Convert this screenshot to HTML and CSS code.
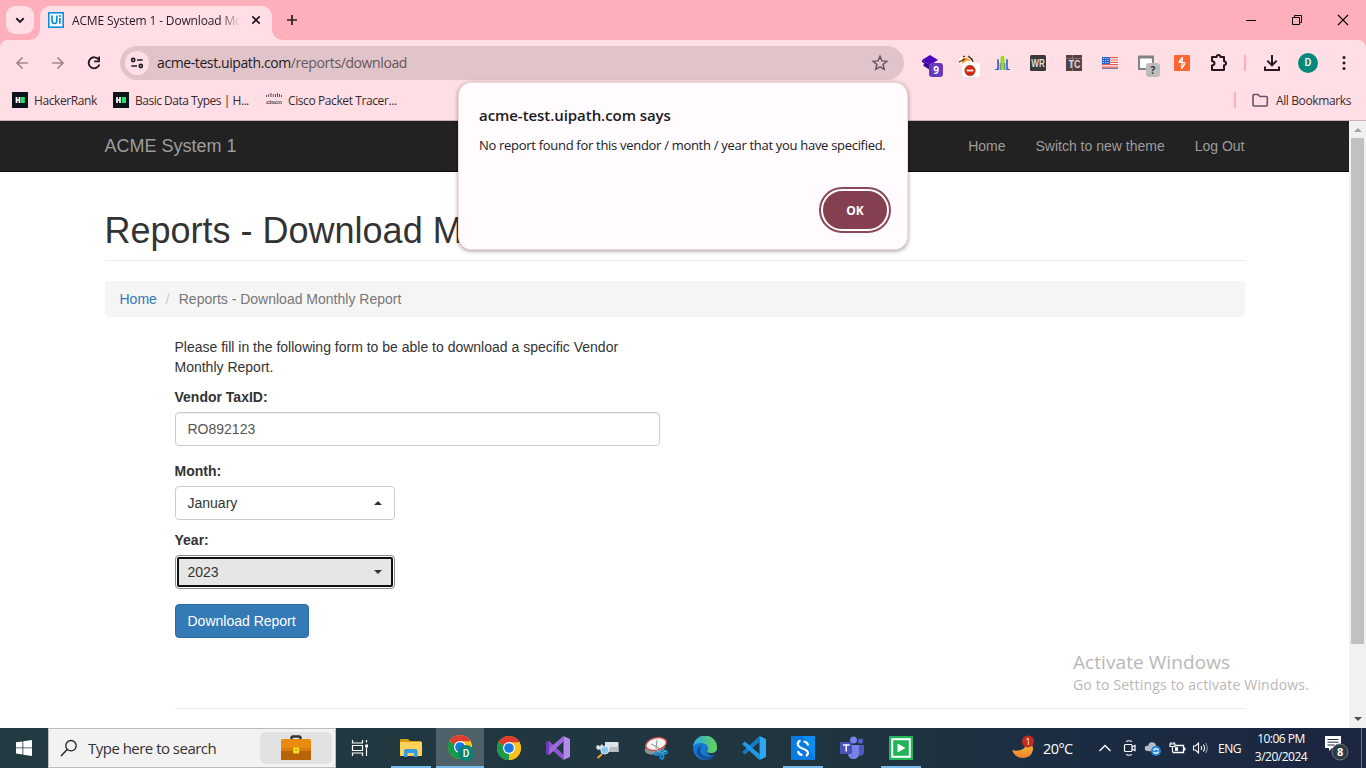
FILE: index.html
```html
<!DOCTYPE html>
<html lang="en">
<head>
<meta charset="utf-8">
<title>ACME System 1 - Download Monthly Report</title>
<link rel="stylesheet" href="styles.css">
</head>
<body>
<div class="screen">
  <div class="tabstrip">
    <div class="tab-search"><svg width="28" height="28" viewBox="0 0 28 28"><path d="M10.3 12.2l3.7 3.7 3.7-3.7" fill="none" stroke="#241a1d" stroke-width="2"/></svg></div>
    <div class="tab">
      <svg class="tab-icon" width="16" height="16" viewBox="0 0 16 16"><rect x=".8" y=".8" width="14.400" height="14.400" fill="#fff" stroke="#0e8fdc" stroke-width="1.600"/><path d="M4 3.500v5.300q0 2.700 2.400 2.700t2.400-2.700V3.500M11.900 6v5.800" fill="none" stroke="#0e8fdc" stroke-width="1.700"/><circle cx="11.900" cy="4" r="1.100" fill="#0e8fdc"/></svg>
      <span class="tab-title">ACME System 1 - Download Mo</span>
      <svg class="tab-close" width="16" height="16" viewBox="0 0 16 16"><path d="M4.300 4.300l7.400 7.400M11.700 4.300l-7.400 7.400" stroke="#241a1d" stroke-width="1.700"/></svg>
    </div>
    <svg class="new-tab" width="20" height="20" viewBox="0 0 20 20"><path d="M10 5v10M5 10h10" stroke="#2c2023" stroke-width="1.700"/></svg>
    <div class="win-controls">
      <svg width="46" height="40" viewBox="0 0 46 40"><path d="M18 20.500h10" stroke="#000"/></svg>
      <svg width="46" height="40" viewBox="0 0 46 40"><path d="M18.500 17.500h7v7h-7zM20.500 17.500v-2h7v7h-2" fill="none" stroke="#000"/></svg>
      <svg width="46" height="40" viewBox="0 0 46 40"><path d="M18 15l10 10M28 15L18 25" stroke="#000" stroke-width="1.100"/></svg>
    </div>
  </div>

  <div class="toolbar-wrap">
  <div class="toolbar">
    <div class="nav-buttons">
      <svg width="36" height="36" viewBox="0 0 36 36"><path d="M24 18H13M18.500 12.500L13 18l5.500 5.500" fill="none" stroke="#a2898f" stroke-width="1.700"/></svg>
      <svg width="36" height="36" viewBox="0 0 36 36"><path d="M12 18h11M17.500 12.500L23 18l-5.500 5.500" fill="none" stroke="#a2898f" stroke-width="1.700"/></svg>
      <svg width="36" height="36" viewBox="0 0 36 36"><path d="M22.700 14.700A5.500 5.500 0 1 0 23.400 19.500" fill="none" stroke="#241a1d" stroke-width="1.900"/><path d="M24 11.500v5.700h-5.800v-1.700h4.100v-4z" fill="#241a1d"/></svg>
    </div>
    <div class="omnibox">
      <div class="site-info"><svg width="16" height="16" viewBox="0 0 16 16"><g fill="none" stroke="#241a1d" stroke-width="1.600"><circle cx="4.200" cy="5" r="1.600"/><path d="M8 5h5.700M2.300 11H8"/><circle cx="11.800" cy="11" r="1.600"/></g></svg></div>
      <span class="url"><span class="host">acme-test.uipath.com</span>/reports/download</span>
      <svg class="star" width="18" height="18" viewBox="0 0 18 18"><path d="M9 2.400l1.900 4.500 4.900.4-3.700 3.200 1.100 4.800L9 12.800l-4.200 2.500 1.100-4.800-3.700-3.200 4.900-.4z" fill="none" stroke="#66565b" stroke-width="1.500"/></svg>
    </div>
    <div class="extensions">
      <div class="ext"><svg width="36" height="30" viewBox="0 0 36 30"><path d="M9 12l8-5 8 5-8 5z" fill="#4d05bb"/><path d="M9 12l8 5v5l-7-4.500 1.500-2L9 14z" fill="#3a0594"/><rect x="16" y="15" width="14" height="14" rx="3" fill="#6939bd"/><text class="badge-text" x="20.200" y="26" fill="#fff">9</text></svg></div>
      <div class="ext"><svg width="36" height="30" viewBox="0 0 36 30"><path d="M10 11q4-4 12 0l3 5H12z" fill="#fff"/><path d="M13 11q3-3 7 0l2 2-4-.6-5 3.600z" fill="#f49a28"/><path d="M10 14l6-3M19 8l4 3 1 3M14 9l2-1" stroke="#4a2d19" stroke-width="1.200"/><rect x="13" y="15" width="18" height="14" rx="3" fill="#fff"/><circle cx="21" cy="22.500" r="5.200" fill="#dc250f" stroke="#79503c" stroke-width=".7"/><path d="M17.700 22.500h6.600" stroke="#fff" stroke-width="1.800"/></svg></div>
      <div class="ext"><svg width="36" height="30" viewBox="0 0 36 30"><path d="M12 11.500q1-1 2 0V22h-3q1-1 1-3zM21 11.500q1-1 2 0V19q0 2 1 3h-3z" fill="#5374d6"/><path d="M10 21.500h4M21 21.500h4" stroke="#3e69ac"/><path d="M15.500 22V10q0-2.500 2-2.500t2 2.500v12z" fill="#9bd81b"/><path d="M15.200 15v7M19.800 15v7" stroke="#4d7690"/></svg></div>
      <div class="ext"><svg width="36" height="30" viewBox="0 0 36 30"><rect x="9" y="7" width="16" height="16" rx="1.500" fill="#393939"/><text class="ext-text" x="10.300" y="19.200" textLength="13.500" lengthAdjust="spacingAndGlyphs">WR</text></svg></div>
      <div class="ext"><svg width="36" height="30" viewBox="0 0 36 30"><rect x="9" y="7" width="16" height="16" fill="#57413f"/><path d="M15.500 7v16M9 10.500h16" stroke="#a3807a" stroke-width=".7"/><text class="ext-text" x="11.500" y="20" textLength="12" lengthAdjust="spacingAndGlyphs">TC</text></svg></div>
      <div class="ext"><svg width="36" height="30" viewBox="0 0 36 30"><rect x="9" y="9" width="16" height="11" fill="#fff"/><path d="M9 9.700h16M9 12h16M9 14.300h16M9 16.600h16M9 19.200h16" stroke="#e9574d" stroke-width="1.200"/><rect x="9" y="9" width="8" height="7" fill="#2765d2"/><path d="M10 10.500h6M10 12.500h6M10 14.500h6" stroke="#fff" stroke-width=".7" stroke-dasharray="1 1.200"/><path d="M9 20.500h16" stroke="#737da1"/></svg></div>
      <div class="ext"><svg width="36" height="30" viewBox="0 0 36 30"><rect x="10" y="9" width="14" height="12" fill="#fff" stroke="#818584" stroke-width="2"/><path d="M9 9h16" stroke="#818584" stroke-width="3"/><rect x="17" y="15" width="14" height="14" rx="3" fill="#bcbcbc"/><text class="badge-text" x="21.400" y="26" fill="#333">?</text></svg></div>
      <div class="ext"><svg width="36" height="30" viewBox="0 0 36 30"><rect x="9" y="7" width="16" height="16" rx="1" fill="#ff6633"/><path d="M17.300 9v4.700h-3l3.200-4.500M13.800 14.500h6.400M16.700 21v-5h3l-3.200 4.800" stroke="#fff" stroke-width="1.200" fill="none"/></svg></div>
      <div class="ext"><svg width="36" height="30" viewBox="0 0 36 30"><path d="M11 9h4.500q.3-2 2-2t2 2H23v4.300q2 .2 2 2t-2 2V22H11v-4.500q2.500-.3 2.500-2.200T11 13z" fill="none" stroke="#241a1d" stroke-width="2" stroke-linejoin="round"/></svg></div>
      <i class="divider"></i>
      <div class="ext"><svg width="36" height="30" viewBox="0 0 36 30"><path d="M18 7v10M13.300 12.600l4.700 4.700 4.700-4.700M11 18.500V22h14v-3.500" fill="none" stroke="#241a1d" stroke-width="2"/></svg></div>
      <div class="ext"><span class="avatar">D</span></div>
      <div class="ext"><svg width="36" height="30" viewBox="0 0 36 30"><g fill="#241a1d"><circle cx="18" cy="9.500" r="1.500"/><circle cx="18" cy="15" r="1.500"/><circle cx="18" cy="20.500" r="1.500"/></g></svg></div>
    </div>
  </div>
  </div>

  <div class="bookmarks">
    <div class="bookmark bm-1"><svg width="16" height="16" viewBox="0 0 16 16"><rect width="16" height="16" fill="#0b141b"/><path d="M4.500 5v6M7.500 5v6M4.500 8h3" stroke="#fff" stroke-width="1.700"/><rect x="8.800" y="5" width="4" height="6" fill="#1be65f"/></svg><span>HackerRank</span></div>
    <div class="bookmark bm-2"><svg width="16" height="16" viewBox="0 0 16 16"><rect width="16" height="16" fill="#0b141b"/><path d="M4 5v6M7 5v6M4 8h3" stroke="#fff" stroke-width="1.700"/><rect x="8.800" y="5" width="4.200" height="6" fill="#1be65f"/></svg><span>Basic Data Types | H...</span></div>
    <div class="bookmark bm-3"><svg width="16" height="16" viewBox="0 0 16 16"><path d="M.5 3v2M2.700 2v3M5 1v4M7.300 2v3M9.500 2v3M11.500 1v4M13.500 2v3M15.500 3v2" stroke="#5b5154"/><text class="cisco-text" x="0" y="11.800" textLength="16" lengthAdjust="spacingAndGlyphs">cisco</text></svg><span>Cisco Packet Tracer...</span></div>
    <div class="all-bookmarks"><i class="divider"></i><svg width="18" height="16" viewBox="0 0 18 16"><path d="M2 3.500q0-1 1-1h4l2 2h6.300q1 0 1 1V13q0 1-1 1H3q-1 0-1-1z" fill="none" stroke="#66565b" stroke-width="1.600"/></svg><span>All Bookmarks</span></div>
  </div>

  <div class="viewport">
    <div class="page">
      <nav class="navbar"><div class="container nav-inner"><span class="brand">ACME System 1</span><span class="nav-links"><a>Home</a><a>Switch to new theme</a><a>Log Out</a></span></div></nav>
      <main class="container">
        <h1>Reports - Download M</h1>
        <div class="breadcrumb"><a>Home</a><i>/</i><span>Reports - Download Monthly Report</span></div>
        <div class="form">
          <p>Please fill in the following form to be able to download a specific Vendor Monthly Report.</p>
          <label>Vendor TaxID:</label>
          <div class="field input">RO892123</div>
          <label>Month:</label>
          <div class="field select">January<i class="caret up"></i></div>
          <label>Year:</label>
          <div class="field select focused">2023<i class="caret"></i></div>
          <div class="download">Download Report</div>
          <hr>
        </div>
      </main>
    </div>
    <div class="scrollbar"><i class="arrow up"></i><div class="thumb"></div><i class="arrow down"></i></div>
    <div class="watermark"><div class="wm-title">Activate Windows</div><div class="wm-text">Go to Settings to activate Windows.</div></div>
  </div>

  <div class="taskbar">
    <div class="start"><svg width="16" height="16" viewBox="0 0 16 16"><path d="M0 2.300l6.500-.9v6.100H0zM7.300 1.300L16 0v7.500H7.300zM0 8.300h6.500v6.200L0 13.600zM7.300 8.300H16V16l-8.700-1.300z" fill="#fff"/></svg></div>
    <div class="search">
      <svg width="18" height="18" viewBox="0 0 18 18"><circle cx="11" cy="6.700" r="5.200" fill="none" stroke="#222" stroke-width="1.300"/><path d="M7.200 10.500L1 17" stroke="#222" stroke-width="1.400"/></svg>
      <span class="search-text">Type here to search</span>
      <div class="highlight"><svg width="32" height="26" viewBox="0 0 32 26"><path d="M11.500 5V3q0-1.500 1.500-1.500h6Q20.500 1.500 20.500 3v2" fill="none" stroke="#333" stroke-width="2.500"/><rect x="1" y="4" width="30" height="21" rx="1.500" fill="#e88b0e"/><path d="M1 16h30v8q0 1-1 1H2q-1 0-1-1z" fill="#b8620a"/><path d="M1 13h30v3H1z" fill="#d67c0a"/><rect x="13.200" y="12.500" width="6" height="6" rx="1" fill="#fadc24"/><path d="M15 15h2.500" stroke="#b78a05"/></svg></div>
    </div>
    <div class="task task-view"><svg width="18" height="18" viewBox="0 0 18 18"><g fill="none" stroke="#fff" stroke-width="1.200"><path d="M1.500 1v3h10V1M1.500 6.500h10v5h-10zM1.500 17v-3h10v3"/><path d="M15.500 1v2.500M15.500 9v8"/></g><rect x="14.200" y="5.500" width="2.800" height="3" fill="#fff"/></svg></div>
    <div class="task open"><svg width="24" height="24" viewBox="0 0 24 24"><path d="M1 4q0-1 1-1h7l2 2h11v15H1z" fill="#dc9a0c"/><path d="M1 6h22v13q0 1-1 1H2q-1 0-1-1z" fill="#ffd35b"/><path d="M5 21v-6q0-2 2-2h9.500q2 0 2 2v6h-3.500v-4H8.500v4z" fill="#349be3"/></svg></div>
    <div class="task active"><svg class="chrome-profile" width="28" height="28" viewBox="0 0 28 28"><use href="#chrome" x="2" y="1"/><circle cx="20" cy="19" r="8" fill="#078375"/><text class="profile-text" x="16.700" y="22.800">D</text></svg></div>
    <div class="task"><svg width="24" height="24" viewBox="0 0 24 24"><g id="chrome"><circle cx="12" cy="12" r="12" fill="#fbc116"/><path d="M12 12L1.600 6A12 12 0 0 0 11.800 24z" fill="#189a4c"/><path d="M12 12L1.600 6A12 12 0 0 1 22.400 6z" fill="#e33b2e"/><path d="M12 6.300h10.500A12 12 0 0 1 11.800 24L17 15z" fill="#fbc116"/><path d="M1.600 6L7 15l5 3-.2 6A12 12 0 0 1 1.600 6z" fill="#189a4c"/><circle cx="12" cy="12" r="6" fill="#fff"/><circle cx="12" cy="12" r="4.800" fill="#1976e6"/></g></svg></div>
    <div class="task"><svg width="24" height="24" viewBox="0 0 24 24"><path d="M0 6.500L3 5l14.500 13.500V24L0 9z" fill="#8a58cc"/><path d="M0 17.500L3 19 17.500 5.500V0L0 15z" fill="#9b6bdb"/><path d="M0 6.500L3 5v14l-3-1.500z" fill="#6d3cb4"/><path d="M17.500 0L24 3v18l-6.500 3z" fill="#b48aea"/></svg></div>
    <div class="task"><svg width="24" height="24" viewBox="0 0 24 24"><path d="M10 6h13.500v10H10z" fill="#dfe4e6"/><path d="M15 11h8.500v5H13z" fill="#b6bec1"/><path d="M2 9l3 1 2-2 2 3 4-1v3H6l-3 1-2-2z" fill="#d7dfe3"/><circle cx="9.800" cy="14" r="4" fill="#8cc6e9" stroke="#d7eff9"/><path d="M7 18l-4.500 4" stroke="#e6a632" stroke-width="2.200"/></svg></div>
    <div class="task"><svg width="24" height="24" viewBox="0 0 24 24"><ellipse cx="11" cy="12" rx="10.500" ry="6" transform="rotate(-18 11 12)" fill="#8d9394"/><ellipse cx="12" cy="8" rx="10.500" ry="6" transform="rotate(-14 12 8)" fill="#f5f5f5" stroke="#d94b4b" stroke-width="1.400"/><path d="M7 8l8 4M13 4l-1 9" stroke="#8b8e92"/><path d="M16 17L11 12.500M16 17l7-2" stroke="#d5dde0"/><g stroke="#1691d4" stroke-width="1.700" fill="none"><ellipse cx="20" cy="16" rx="3" ry="1.700"/><ellipse cx="13" cy="17.500" rx="2.200" ry="1.500"/><ellipse cx="18" cy="20.500" rx="1.600" ry="2.400"/></g></svg></div>
    <div class="task"><svg width="24" height="24" viewBox="0 0 24 24"><defs><linearGradient id="edge-a"><stop stop-color="#2aa9e8"/><stop offset="1" stop-color="#65d54f"/></linearGradient></defs><circle cx="12" cy="12" r="12" fill="#1577ce"/><path d="M14 14q0 3 4.500 3 3 0 6-2v4q-4 1-8 0-4-2-2.500-5z" fill="#20353f"/><path d="M0 11A12 12 0 0 1 24 12q-.5 5-6 5-4 0-4-2 2-1 1-4-2-4-7-4-6 0-8 4z" fill="url(#edge-a)"/><path d="M9 9.500q-4 5 0 9t13 1q-5 6-12 3.500Q3 20 4 14q1-3.500 5-4.500z" fill="#134e9b"/></svg></div>
    <div class="task"><svg width="24" height="24" viewBox="0 0 24 24"><path d="M17.500 6L3 18.500 0 16 17.500 0z" fill="#1679bd"/><path d="M0 8l3-2.500L17.500 18v6z" fill="#2099e6"/><path d="M17.500 0L24 3v18l-6.500 3z" fill="#2ca9f3"/></svg></div>
    <div class="task open"><svg width="24" height="24" viewBox="0 0 24 24"><rect width="24" height="24" fill="#087ae3"/><path d="M12 0h12v24z" fill="#0b8eed"/><path d="M9.500 4.500Q6 6 7 9q.7 2 4.500 3.500Q17 14.500 17 17q0 1.500-2 3M12.500 5.500q4 .3 4.500 4M7 15q.5 3.500 4.500 4" fill="none" stroke="#fff" stroke-width="2.200"/></svg></div>
    <div class="task"><svg width="24" height="24" viewBox="0 0 24 24"><circle cx="20.500" cy="5" r="2.600" fill="#5360ca"/><circle cx="13.500" cy="4" r="3.500" fill="#7b83eb"/><path d="M16 9h8v7q0 4-5 4z" fill="#4f58c1"/><path d="M8 9h11v8q0 6-5.500 6T8 17z" fill="#7781e7"/><rect y="6" width="12" height="12" rx="1" fill="#4852b8"/><path d="M3 9h6.500M6.200 9v6.500" stroke="#fff" stroke-width="1.500"/></svg></div>
    <div class="task open"><svg width="24" height="24" viewBox="0 0 24 24"><rect width="24" height="24" fill="#22b459"/><rect x="3.200" y="3.200" width="17.600" height="17.600" fill="none" stroke="#fff" stroke-width="2"/><path d="M8.500 7.500l8 4.500-8 4.500z" fill="#fff"/></svg></div>
    <div class="tray">
      <svg class="weather" width="26" height="26" viewBox="0 0 26 26"><defs><linearGradient id="moon" x2="0" y2="1"><stop stop-color="#ffc43d"/><stop offset="1" stop-color="#ec7f2b"/></linearGradient></defs><path d="M1 15q6 2 11-1 4-3 3-8 8 3 7 9-2 8-10 8-8 0-11-8z" fill="url(#moon)"/><circle cx="17" cy="6.500" r="6" fill="#c42b1c"/><text class="weather-badge" x="14.600" y="10">1</text></svg>
      <span class="temp">20°C</span>
      <svg class="chevron" width="14" height="10" viewBox="0 0 14 10"><path d="M1.500 8L7 2.500 12.500 8" fill="none" stroke="#fff" stroke-width="1.300"/></svg>
      <svg class="meet" width="14" height="18" viewBox="0 0 14 18"><g fill="none" stroke="#fff" stroke-width="1.200"><rect x="1.500" y="5.500" width="7.500" height="7" rx="1"/><path d="M9 8l3-1.500v5L9 10M3 2.500q3-1.500 6 0M3 15.500q3 1.500 6 0"/></g></svg>
      <svg class="cloud" width="18" height="16" viewBox="0 0 18 16"><path d="M3 11q-3-1-2-4 1-2 3-1 1-5 5.500-3.500Q12 3 12 6q4 0 4 4l-2 2z" fill="#b4bbc5"/><circle cx="12" cy="11" r="5" fill="#2483d4"/><path d="M9.500 10.500q1-2.500 4-1.500l1 1M14.500 11.500q-1 2.500-4 1.500l-1-1" fill="none" stroke="#fff" stroke-width="1.300"/></svg>
      <svg class="battery" width="17" height="14" viewBox="0 0 17 14"><path d="M6.500 4.500h8v7H4M15.800 6.500v3" fill="none" stroke="#fff" stroke-width="1.300"/><rect x="6" y="6.200" width="3" height="3.600" fill="#fff"/><path d="M1 3h5v2.500H1zM2 1v2M5 1v2M3.500 5v6.500" fill="none" stroke="#fff" stroke-width="1.200"/></svg>
      <svg class="speaker" width="17" height="14" viewBox="0 0 17 14"><g fill="none" stroke="#fff" stroke-width="1.100"><path d="M1.500 5h2l3-3v10l-3-3h-2zM9 5q1.500 2 0 4M11.300 3.500q2.500 3.500 0 7"/><path d="M13.500 2q3.700 5 0 10" stroke="#8c96a8"/></g></svg>
      <span class="lang">ENG</span>
      <div class="clock"><span class="time">10:06 PM</span><span class="date">3/20/2024</span></div>
      <svg class="notes" width="26" height="26" viewBox="0 0 26 26"><path d="M1 1h16v12H8l-3 3v-3H1z" fill="#fff"/><path d="M3.500 4.500h11M3.500 7.200h11M3.500 10h7" stroke="#203047"/><circle cx="16" cy="17" r="8" fill="#303c43" stroke="#68727d"/><text class="note-badge" x="12.900" y="21">8</text></svg>
      <i class="peek"></i>
    </div>
  </div>

  <div class="dialog">
    <div class="dialog-title">acme-test.uipath.com says</div>
    <div class="dialog-text">No report found for this vendor / month / year that you have specified.</div>
    <div class="ok">OK</div>
  </div>
</div>
</body>
</html>
```
FILE: styles.css
```css
* { box-sizing: border-box; }
body { margin: 0; overflow: hidden; font-family: "Open Sans", "Noto Sans", sans-serif; }
svg { display: block; flex: none; }
span, .brand, .ok, .download { white-space: nowrap; }
i { font-style: normal; }
.screen { position: relative; width: 1366px; height: 768px; display: flex; flex-direction: column; background: #fff; }

/* Tab strip */
.tabstrip { height: 40px; flex: none; background: #ffaebc; display: flex; align-items: flex-start; padding-left: 6px; }
.tab-search { width: 28px; height: 28px; margin-top: 6px; border-radius: 9px; background: #ffdfe5; }
.tab { position: relative; width: 232px; height: 34px; margin: 6px 0 0 6px; border-radius: 10px 10px 0 0; background: #ffdfe5; display: flex; align-items: center; padding: 0 8px 6px; }
.tab::before, .tab::after { content: ""; position: absolute; bottom: 0; width: 10px; height: 10px; }
.tab::before { left: -10px; background: radial-gradient(circle at 0 0, transparent 9.500px, #ffdfe5 10px); }
.tab::after { right: -10px; background: radial-gradient(circle at 100% 0, transparent 9.500px, #ffdfe5 10px); }
.tab-title { width: 168px; margin-left: 8px; font-size: 12px; letter-spacing: -.15px; color: #241a1d; -webkit-mask-image: linear-gradient(90deg, #000 148px, transparent 168px); mask-image: linear-gradient(90deg, #000 148px, transparent 168px); }
.tab-close { margin-left: 8px; }
.new-tab { margin: 10px 0 0 10px; }
.win-controls { display: flex; margin-left: auto; }

/* Toolbar */
.toolbar-wrap { flex: none; background: #ffaebc; }
.toolbar { height: 46px; display: flex; align-items: center; padding: 0 4px; background: #ffdfe5; border-radius: 8px 8px 0 0; }
.nav-buttons { display: flex; width: 116px; }
.omnibox { width: 784px; height: 34px; border-radius: 17px; background: #e1c4ca; display: flex; align-items: center; padding: 0 15px 0 5px; }
.site-info { width: 24px; height: 24px; border-radius: 50%; background: #ffdfe5; display: grid; place-items: center; }
.url { margin: 0 0 1px 8px; font-size: 14px; letter-spacing: -.4px; color: #66565b; }
.host { color: #241a1d; }
.star { margin-left: auto; }
.extensions { display: flex; align-items: center; margin-left: auto; }
.ext { width: 36px; height: 30px; display: grid; place-items: center; }
.extensions .divider { margin: 0 8px 0 7px; }
.divider { width: 2px; height: 16px; background: #ffaebc; }
.badge-text { font: 700 10px "Open Sans", sans-serif; }
.ext-text { font: 700 11px "Liberation Sans", sans-serif; fill: #ddd; }
.avatar { width: 20px; height: 20px; border-radius: 50%; background: #04897b; color: #fff; font: 500 10.500px/20px Roboto, sans-serif; text-align: center; }

/* Bookmarks */
.bookmarks { height: 35px; flex: none; background: #ffdfe5; border-bottom: 1px solid #cdb0b7; display: flex; align-items: center; padding: 0 15px 6px 12px; font-size: 12px; color: #382a2e; }
.bookmark { display: flex; align-items: center; gap: 6px; }
.bm-1 { width: 101px; letter-spacing: -.4px; }
.bm-2 { width: 153px; letter-spacing: -.49px; }
.bm-3 { letter-spacing: -.4px; }
.cisco-text { font: 700 6px "Liberation Sans", sans-serif; fill: #5b5154; }
.all-bookmarks { margin-left: auto; display: flex; align-items: center; letter-spacing: -.38px; }
.all-bookmarks svg { margin: 0 7px 0 15px; }

/* Web page */
.viewport { position: relative; height: 607px; flex: none; display: flex; background: #fff; }
.page { width: 1349px; font: 14px/20px "Liberation Sans", Arial, sans-serif; color: #333; overflow: hidden; }
.container { width: 1140px; margin: 0 auto; }
.navbar { height: 51px; background: #222; border-bottom: 1px solid #080808; }
.nav-inner { height: 50px; display: flex; align-items: center; justify-content: space-between; color: #9d9d9d; }
.brand { font-size: 18px; }
.nav-links { display: flex; gap: 30px; }
h1 { margin: 39px 0 20px; padding-bottom: 9px; border-bottom: 1px solid #eee; font-size: 36px; line-height: 40px; font-weight: 400; white-space: nowrap; }
.breadcrumb { height: 36px; padding: 8px 15px; background: #f5f5f5; border-radius: 4px; color: #777; display: flex; }
.breadcrumb a { color: #337ab7; }
.breadcrumb i { color: #ccc; margin: 0 9px; }
.form { margin: 20px 0 0 70px; }
.form p { width: 485px; margin: 0 0 10px; }
.form label { display: block; font-weight: 700; margin-bottom: 5px; }
.field { height: 34px; border: 1px solid #ccc; border-radius: 4px; padding: 6px 12px; display: flex; justify-content: space-between; align-items: center; }
.input { width: 485px; margin-bottom: 15px; color: #555; box-shadow: inset 0 1px 1px rgba(0,0,0,.075); }
.select { width: 220px; margin-bottom: 10px; }
.focused { margin-bottom: 15px; background: #e6e6e6; border-color: #8c8c8c; outline: 2px solid #101010; outline-offset: -4px; box-shadow: inset 0 0 0 2px #fff; }
.caret { border: 4px solid transparent; border-top-color: #333; border-bottom: 0; }
.caret.up { border-top: 0; border-bottom: 4px solid #333; }
.download { width: 134px; height: 34px; padding: 6px 12px; border: 1px solid #2e6da4; border-radius: 4px; background: #337ab7; color: #fff; }
.form hr { margin: 70px 0 0; border: 0; border-top: 1px solid #eee; }
.scrollbar { width: 17px; background: #f1f1f1; display: flex; flex-direction: column; align-items: center; }
.thumb { width: 13px; height: 506px; margin-top: 6px; background: #c1c1c1; }
.arrow { border: 4px solid transparent; }
.arrow.up { margin-top: 7px; border-top: 0; border-bottom-color: #a3a3a3; }
.arrow.down { margin: auto 0 7px; border-bottom: 0; border-top-color: #505050; }
.watermark { position: absolute; left: 1073px; top: 528px; color: #b8b8b8; white-space: nowrap; }
.wm-title { font-size: 19px; line-height: 26px; letter-spacing: .07px; }
.wm-text { font-size: 14px; line-height: 20px; letter-spacing: .19px; }

/* Taskbar */
.taskbar { height: 40px; flex: none; display: flex; align-items: stretch; background: linear-gradient(90deg, #233a43 0%, #20353f 60%, #1b2c42 80%, #1b2640 100%); color: #fff; }
.start { width: 48px; display: grid; place-items: center; }
.search { width: 288px; background: #f2f2f2; border: 1px solid #bcbcbc; display: flex; align-items: center; padding: 0 3px 0 11px; color: #333; }
.search-text { margin-left: 10px; font-size: 15px; letter-spacing: -.52px; }
.highlight { width: 72px; height: 32px; margin-left: auto; border-radius: 6px; background: #e2e2e2; display: grid; place-items: center; }
.task { width: 48px; margin-right: 1px; display: grid; place-items: center; position: relative; flex: none; }
.task-view { margin-right: 3px; }
.open::after { content: ""; position: absolute; left: 4px; right: 4px; bottom: 0; height: 2px; background: #76b9ed; }
.active { background: #4e6168; border-bottom: 2px solid #76b9ed; }
.active svg { margin-top: 2px; }
.profile-text { font: 500 10px Roboto, sans-serif; fill: #fff; }
.tray { margin-left: auto; display: flex; align-items: center; }
.weather-badge { font: 9px "Open Sans", sans-serif; fill: #fff; }
.temp { width: 54px; margin-left: 6px; font-size: 14.500px; letter-spacing: -.6px; }
.chevron { margin-left: 1px; }
.meet { margin-left: 11px; }
.cloud { margin-left: 7px; }
.battery { margin-left: 7px; }
.speaker { margin-left: 6px; }
.lang { width: 25px; margin-left: 9px; font-size: 12px; letter-spacing: -.45px; }
.clock { width: 54px; margin-left: 11px; display: flex; flex-direction: column; align-items: center; font-size: 12px; line-height: 18px; letter-spacing: -.5px; }
.notes { margin-left: 16px; }
.note-badge { font: 700 11px "Open Sans", sans-serif; fill: #fff; }
.peek { width: 1px; height: 40px; margin: 0 4px 0 11px; background: #687181; }

/* Alert dialog */
.dialog { position: absolute; left: 458px; top: 82px; width: 450px; height: 168px; padding: 21px 17px 18px 20px; display: flex; flex-direction: column; background: #fffbff; border: 1px solid #f3dce1; border-radius: 13px; box-shadow: 0 1px 4px rgba(0,0,0,.4); color: #201a1b; white-space: nowrap; }
.dialog-title { font-size: 15px; font-weight: 600; line-height: 22px; letter-spacing: -.06px; }
.dialog-text { margin-top: 10px; font-size: 13px; line-height: 18px; letter-spacing: -.3px; }
.ok { width: 68px; height: 42px; margin: auto 1px 0 auto; border-radius: 21px; border: 2px solid #fff; outline: 2px solid #8c4a58; background: #844050; color: #fff; display: grid; place-items: center; font-size: 12px; font-weight: 700; }
```
